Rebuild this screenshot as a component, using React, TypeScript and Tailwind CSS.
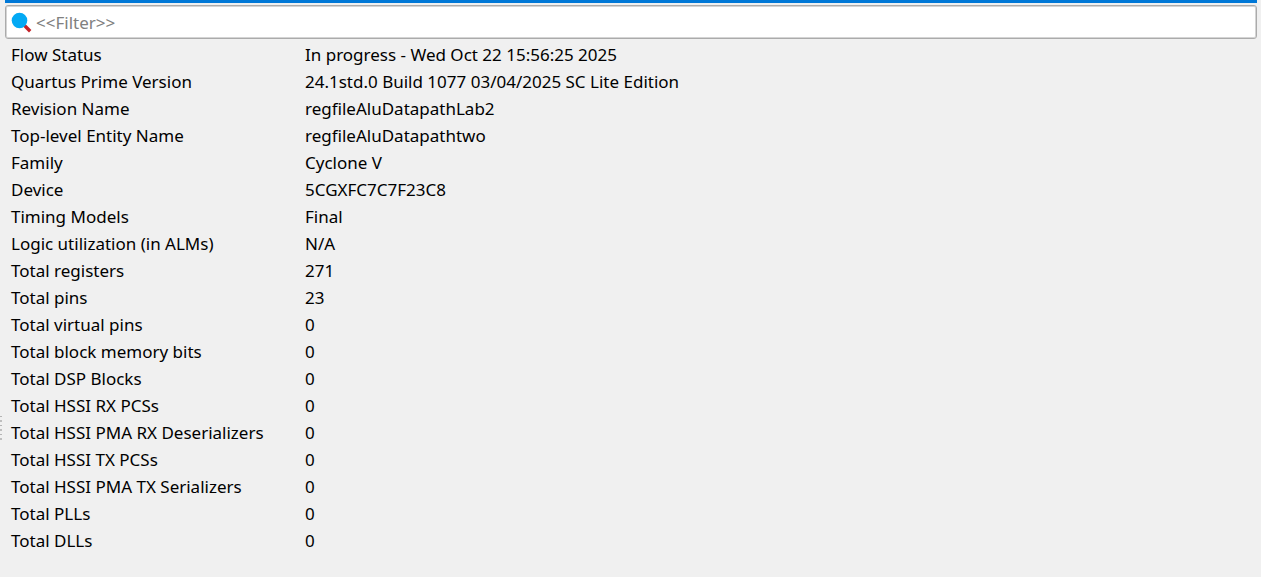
const rows: [string, string][] = [
  ['Flow Status', 'In progress - Wed Oct 22 15:56:25 2025'],
  ['Quartus Prime Version', '24.1std.0 Build 1077 03/04/2025 SC Lite Edition'],
  ['Revision Name', 'regfileAluDatapathLab2'],
  ['Top-level Entity Name', 'regfileAluDatapathtwo'],
  ['Family', 'Cyclone V'],
  ['Device', '5CGXFC7C7F23C8'],
  ['Timing Models', 'Final'],
  ['Logic utilization (in ALMs)', 'N/A'],
  ['Total registers', '271'],
  ['Total pins', '23'],
  ['Total virtual pins', '0'],
  ['Total block memory bits', '0'],
  ['Total DSP Blocks', '0'],
  ['Total HSSI RX PCSs', '0'],
  ['Total HSSI PMA RX Deserializers', '0'],
  ['Total HSSI TX PCSs', '0'],
  ['Total HSSI PMA TX Serializers', '0'],
  ['Total PLLs', '0'],
  ['Total DLLs', '0'],
];

function SplitterGrip() {
  return (
    <svg className="mt-[416px] h-6 w-[5px] shrink-0" viewBox="0 0 5 24" aria-hidden="true">
      <path d="M0 .5h2M0 9.5h2M0 18.5h2" stroke="#b4b4b4" />
      <path d="M0 5h2M0 14h2M0 23h2" stroke="#bebebe" strokeWidth="2" />
    </svg>
  );
}

export default function App() {
  return (
    <div className="flex min-h-screen bg-[#f0f0f0] pr-1 font-['Noto_Sans',sans-serif] text-[17px] leading-[27px] text-black">
      <SplitterGrip />
      <main className="min-w-0 flex-1">
        <div className="h-[3px] bg-[#0078d7]" />
        <label className="mt-[2px] flex h-[34px] items-center rounded-[3px] border border-[#ababab] bg-white pl-[5px] shadow-[inset_0_0_0_1px_#d4d4d4]">
          <svg className="mr-[3px] size-[22px] shrink-0" viewBox="0 0 22 22" aria-hidden="true">
            <path d="M13.5 14.5l5.7 5.7" stroke="#c42127" strokeWidth="3.4" />
            <circle cx="8.5" cy="9.5" r="7.8" fill="#03a9f4" />
          </svg>
          <input aria-label="Filter" placeholder="<<Filter>>" className="min-w-0 flex-1 bg-transparent outline-none placeholder:text-[#808080]" />
        </label>
        <table className="mt-[2px] w-full table-fixed border-collapse text-left">
          <tbody>
            {rows.map(([name, value]) => (
              <tr key={name}>
                <th scope="row" className="w-[294px] p-0 pl-[6px] font-normal">{name}</th>
                <td className="p-0 pl-[6px]">{value}</td>
              </tr>
            ))}
          </tbody>
        </table>
      </main>
    </div>
  );
}
